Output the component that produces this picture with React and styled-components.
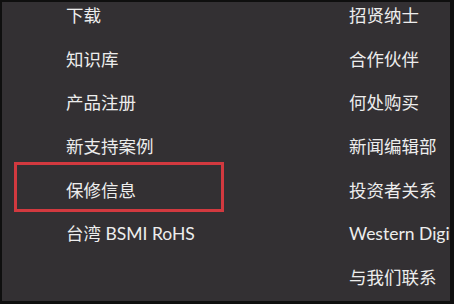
import React from "react";
import styled, { createGlobalStyle } from "styled-components";

const GlobalStyle = createGlobalStyle`
  html, body {
    margin: 0;
    padding: 0;
    background: #0f0f0f;
  }
`;

const leftLinks = ["下载", "知识库", "产品注册", "新支持案例", "保修信息", "台湾 BSMI RoHS"];
const rightLinks = [
  "招贤纳士",
  "合作伙伴",
  "何处购买",
  "新闻编辑部",
  "投资者关系",
  "Western Digital",
  "与我们联系",
];

const App = () => {
  return (
    <>
      <GlobalStyle />
      <Frame>
        <Panel>
          <Column>
            {leftLinks.map((text) => (
              <LinkItem key={text} highlighted={text === "保修信息"}>
                {text}
              </LinkItem>
            ))}
          </Column>
          <Column>
            {rightLinks.map((text) => (
              <LinkItem key={text}>{text}</LinkItem>
            ))}
          </Column>
        </Panel>
      </Frame>
    </>
  );
};

export default App;

const Frame = styled.div`
  width: 454px;
  height: 304px;
  box-sizing: border-box;
  padding: 2px 4px 3px 2px;
`;

const Panel = styled.div`
  height: 100%;
  background: #333033;
  overflow: hidden;
  display: grid;
  grid-template-columns: 283px 1fr;
  padding-left: 64px;
  box-sizing: border-box;
`;

const Column = styled.ul`
  list-style: none;
  margin: 0;
  padding: 4px 0 0;
  display: flex;
  flex-direction: column;
  gap: 23.67px;
  min-width: 0;
`;

const LinkItem = styled.li`
  position: relative;
  height: 20px;
  line-height: 20px;
  font-family: "Lato", "Noto Sans CJK SC", sans-serif;
  font-size: 17.5px;
  color: #ededed;
  white-space: nowrap;

  ${({ highlighted }) =>
    highlighted &&
    `
    &::after {
      content: "";
      position: absolute;
      left: -52px;
      top: -19px;
      width: 210px;
      height: 50px;
      box-sizing: border-box;
      border: 3px solid #d2393f;
    }
  `}
`;
